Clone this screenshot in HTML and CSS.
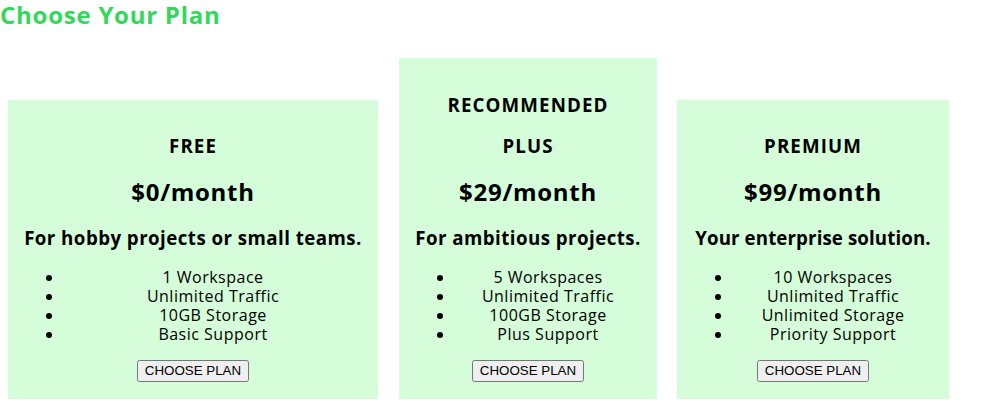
FILE: index.html
```html
<!DOCTYPE html>
<html lang="en">
<head>
<meta charset="utf-8">
<title>Choose Your Plan</title>
<link rel="stylesheet" href="styles.css">
</head>
<body>
<h1 class="page-title">Choose Your Plan</h1>
<main class="plans">
  <section class="plan plan-free">
    <h3 class="plan-name">FREE</h3>
    <h2 class="plan-price">$0/month</h2>
    <h3 class="plan-tagline">For hobby projects or small teams.</h3>
    <ul class="plan-features">
      <li>1 Workspace</li>
      <li>Unlimited Traffic</li>
      <li>10GB Storage</li>
      <li>Basic Support</li>
    </ul>
    <div class="plan-action"><button type="button">CHOOSE PLAN</button></div>
  </section>
  <section class="plan plan-plus">
    <h3 class="plan-name">RECOMMENDED</h3>
    <h3 class="plan-name">PLUS</h3>
    <h2 class="plan-price">$29/month</h2>
    <h3 class="plan-tagline">For ambitious projects.</h3>
    <ul class="plan-features">
      <li>5 Workspaces</li>
      <li>Unlimited Traffic</li>
      <li>100GB Storage</li>
      <li>Plus Support</li>
    </ul>
    <div class="plan-action"><button type="button">CHOOSE PLAN</button></div>
  </section>
  <section class="plan plan-premium">
    <h3 class="plan-name">PREMIUM</h3>
    <h2 class="plan-price">$99/month</h2>
    <h3 class="plan-tagline plan-tagline-tight">Your enterprise solution.</h3>
    <ul class="plan-features">
      <li>10 Workspaces</li>
      <li>Unlimited Traffic</li>
      <li>Unlimited Storage</li>
      <li>Priority Support</li>
    </ul>
    <div class="plan-action"><button type="button">CHOOSE PLAN</button></div>
  </section>
</main>
<div class="page-rule"></div>
</body>
</html>
```
FILE: styles.css
```css
html, body {
  margin: 0;
  padding: 0;
  background: #ffffff;
}

body {
  font-family: "Open Sans", "Noto Sans", sans-serif;
  color: #000;
}

.page-title {
  margin: 0;
  font-size: 24px;
  line-height: 29px;
  font-weight: 700;
  letter-spacing: 0.75px;
  color: #33d85a;
}

.plans {
  display: flex;
  align-items: flex-end;
  gap: 21px;
  padding: 0 8px 8px 8px;
  margin-top: 29px;
}

.plan {
  box-sizing: border-box;
  background: #d5fdd9;
  padding: 16px 16px 0 16px;
  text-align: center;
  flex: none;
  display: flow-root;
}

.plan-free { width: 370px; }
.plan-plus { width: 258px; }
.plan-premium { width: 272px; margin-left: -1px; }

.plan h3 {
  font-size: 18.72px;
  line-height: 23px;
  font-weight: 700;
  margin: 18.72px 0;
  white-space: nowrap;
}

.plan .plan-name {
  letter-spacing: 1.1px;
}

.plan .plan-tagline {
  letter-spacing: 0.45px;
}

.plan .plan-tagline-tight {
  letter-spacing: 0.1px;
}

.plan h2 {
  font-size: 24px;
  line-height: 29px;
  font-weight: 700;
  letter-spacing: 0.7px;
  margin: 19.92px 0;
}

.plan-features {
  margin: 16px 0;
  padding-left: 40px;
  font-size: 16px;
  line-height: 19px;
  letter-spacing: 0.5px;
}

.plan-action {
  display: flex;
  justify-content: center;
  margin: 16px 0 17px 0;
}

.plan-action button {
  font-family: Arial, "Liberation Sans", sans-serif;
  font-size: 13.33px;
  line-height: 16px;
  padding: 1px 6px;
}

.page-rule {
  border-top: 1px solid #222;
}
```
